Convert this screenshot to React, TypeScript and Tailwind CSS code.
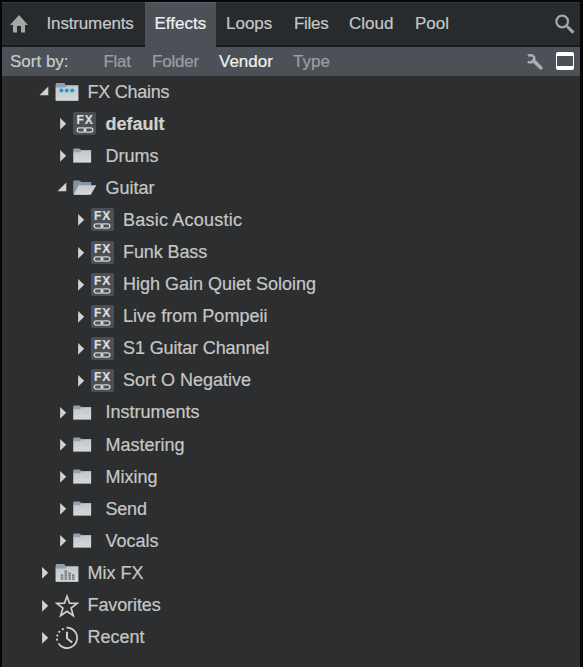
import React from "react";

type Kind = "chains" | "fx" | "folder" | "open" | "mix" | "star" | "recent";
type Row = { label: string; kind: Kind; level: number; open?: boolean; bold?: boolean; tracking?: string };

const rows: Row[] = [
  { label: "FX Chains", kind: "chains", level: 0, open: true, tracking: "tracking-[-0.25px]" },
  { label: "default", kind: "fx", level: 1, bold: true },
  { label: "Drums", kind: "folder", level: 1 },
  { label: "Guitar", kind: "open", level: 1, open: true },
  { label: "Basic Acoustic", kind: "fx", level: 2, tracking: "tracking-[0.22px]" },
  { label: "Funk Bass", kind: "fx", level: 2, tracking: "tracking-[-0.1px]" },
  { label: "High Gain Quiet Soloing", kind: "fx", level: 2 },
  { label: "Live from Pompeii", kind: "fx", level: 2, tracking: "tracking-[0.03px]" },
  { label: "S1 Guitar Channel", kind: "fx", level: 2, tracking: "tracking-[-0.12px]" },
  { label: "Sort O Negative", kind: "fx", level: 2 },
  { label: "Instruments", kind: "folder", level: 1 },
  { label: "Mastering", kind: "folder", level: 1 },
  { label: "Mixing", kind: "folder", level: 1 },
  { label: "Send", kind: "folder", level: 1, tracking: "tracking-[-0.2px]" },
  { label: "Vocals", kind: "folder", level: 1 },
  { label: "Mix FX", kind: "mix", level: 0 },
  { label: "Favorites", kind: "star", level: 0, tracking: "tracking-[-0.1px]" },
  { label: "Recent", kind: "recent", level: 0 },
];

const indents = ["pl-[36px]", "pl-[54px]", "pl-[71.5px]"];

function Gradients() {
  return (
    <svg width="0" height="0" className="absolute">
      <defs>
        <linearGradient id="paper" x1="0" y1="0" x2="0" y2="1">
          <stop offset="0" stopColor="#c3c7ca" />
          <stop offset="1" stopColor="#d6d9da" />
        </linearGradient>
      </defs>
    </svg>
  );
}

function Arrow({ open }: { open?: boolean }) {
  return (
    <svg width="12" height="14" viewBox="0 0 12 14" className="shrink-0">
      {open ? <path d="M1.5 10.3L10.3 1.4V10.3Z" fill="#d2d2d0" /> : <path d="M4.1 .9L10.2 6.8L4.1 12.8Z" fill="#d2d2d0" />}
    </svg>
  );
}

function Icon({ kind }: { kind: Kind }) {
  if (kind === "fx")
    return (
      <span className="mb-px flex h-[23px] w-[23px] flex-col items-center rounded-[2px] bg-[#4b5057] pt-[3px]">
        <span className="h-[11px] pl-px text-[12px] leading-[11px] font-bold tracking-[0.9px] text-[#dededc]">FX</span>
        <svg width="18" height="7" viewBox="0 0 18 7" fill="none" stroke="#d4d4d2" strokeWidth="1.4">
          <rect x="1.2" y="1.9" width="8.3" height="4.2" rx="2.1" />
          <rect x="8.5" y="1.9" width="8.3" height="4.2" rx="2.1" />
          <path d="M7.2 4H10.8" strokeWidth="1" />
        </svg>
      </span>
    );
  return (
    <svg width="24" height="24" viewBox="0 0 24 24" fill="none">
      {(kind === "chains" || kind === "mix") && (
        <>
          <path d="M.5 5Q.5 3 2 3H8.5Q10 3 10.8 5.2H23.3V20.5H.5Z" fill="#8f9fb0" />
          <path d="M.8 7.5H10L12 5.6H23.3V20.8H.8Z" fill="url(#paper)" />
        </>
      )}
      {kind === "chains" && (
        <g fill="#169fcf">
          <circle cx="6.4" cy="10.6" r="2" />
          <circle cx="11.8" cy="10.6" r="2" />
          <circle cx="17.2" cy="10.6" r="2" />
        </g>
      )}
      {kind === "mix" && (
        <g stroke="#62676a" strokeWidth="2.6" strokeDasharray="1.3 .7">
          <path d="M7 18.8V13.4M10.8 18.8V8.7M14.6 18.8V11M18.3 18.8V12.8" />
        </g>
      )}
      {kind === "folder" && (
        <>
          <path d="M.2 5.7Q.2 4.5 1.4 4.5H6.3Q7.4 4.5 8 6H18.2V18.7H.2Z" fill="#93a1b0" />
          <path d="M.5 8.3H7L8.7 6.5H18V18.2H.5Z" fill="url(#paper)" />
        </>
      )}
      {kind === "open" && (
        <>
          <path d="M.2 5.7Q.2 4.5 1.4 4.5H6.3Q7.4 4.5 8 6H18.2V9L15 18.7H.2Z" fill="#8493a7" />
          <path d="M5.5 9.3H23.3L17.8 18.7H.8Z" fill="url(#paper)" />
        </>
      )}
      {kind === "star" && (
        <path d="M12 2.2L14.5 9.2L22.2 9.4L16.1 14L18.3 21.6L12 17.2L5.7 21.6L7.9 14L1.8 9.4L9.5 9.2Z" stroke="#d0d0ce" strokeWidth="1.7" />
      )}
      {kind === "recent" && (
        <g stroke="#d2d2d0" strokeWidth="1.7">
          <path d="M11.5 1.7A10.2 10.2 0 1 1 3.4 17.4" />
          <path d="M12 5.8V12.4L17.2 16.6" strokeWidth="1.9" />
          <g fill="#d2d2d0" stroke="none">
            <circle cx="7.8" cy="3.2" r="1.1" />
            <circle cx="4.3" cy="5.8" r="1.1" />
            <circle cx="2.3" cy="9.6" r="1.1" />
            <circle cx="2" cy="13.7" r="1.1" />
          </g>
        </g>
      )}
    </svg>
  );
}

function Tab({ label, className }: { label: string; className: string }) {
  return <button className={`h-full shrink-0 whitespace-nowrap text-left ${className}`}>{label}</button>;
}

export default function App() {
  return (
    <div className="h-[667px] w-[583px] overflow-hidden bg-[#050606] pt-[2px] pr-[3px] pl-[2px] font-['Liberation_Sans',Arial,sans-serif] text-[#c5c7c7] [-webkit-text-stroke:0.2px_currentColor]">
      <Gradients />
      <div className="flex h-[665px] flex-col bg-[#2c2e2f]">
        <header className="flex h-[45px] shrink-0 items-start bg-[#4c5158] text-[17px]">
          <div className="flex h-[45px] w-[143px] items-center border-t border-b-2 border-t-[#34383b] border-b-[#181b1d] bg-[#272b2d] pl-[8px]">
            <svg width="18" height="18" viewBox="0 0 18 18" className="mr-[18.5px] shrink-0" fill="#a4a5a5">
              <path d="M9 0L18 10H15V17.5H11V11H7V17.5H3V10H0Z" />
            </svg>
            <Tab label="Instruments" className="tracking-[-0.15px]" />
          </div>
          <div className="h-[43px] w-[71px] border-t border-[#5a5f66] pl-[9.5px] text-[#f0f0ef]">
            <Tab label="Effects" className="" />
          </div>
          <nav className="flex h-[45px] flex-1 items-center border-t border-b-2 border-t-[#34383b] border-b-[#181b1d] bg-[#272b2d] pl-[10px]">
            <Tab label="Loops" className="w-[68px]" />
            <Tab label="Files" className="w-[55px] tracking-[-0.3px]" />
            <Tab label="Cloud" className="w-[66px]" />
            <Tab label="Pool" className="w-[140px]" />
            <svg width="20" height="20" viewBox="0 0 20 20" fill="none" stroke="#a6a7a7">
              <circle cx="7.2" cy="7.5" r="5.8" strokeWidth="2.2" />
              <path d="M11.4 11.6L13 13.2" strokeWidth="1.8" />
              <path d="M12.5 12.7L18.4 18.6" strokeWidth="3" />
            </svg>
          </nav>
        </header>
        <div className="flex h-[29px] shrink-0 items-center bg-[#4c5158] pl-[8px] text-[17px] text-[#9b9ea2]">
          <span className="w-[93.5px] text-[#c9cbcc]">Sort by:</span>
          <span className="w-[48.5px] tracking-[-0.3px]">Flat</span>
          <span className="w-[67px] tracking-[-0.2px]">Folder</span>
          <span className="w-[74px] text-[#f0f0ef]">Vendor</span>
          <span className="w-[234px]">Type</span>
          <svg width="16" height="16" viewBox="0 0 16 16" className="mr-[13px] shrink-0" fill="none" stroke="#acafb1">
            <path d="M.8 1.7Q5 .2 7 2.9Q8 6.6 5.6 7.9Q3 9 .6 7.7" strokeWidth="2.4" />
            <path d="M6.4 6.6L13.8 13.8" strokeWidth="3.6" strokeLinecap="round" />
          </svg>
          <span className="mb-[2px] h-[18px] w-[18px] shrink-0 rounded-[2px] border-x-[1.5px] border-y-[4px] border-white" />
        </div>
        <main className="flex flex-col text-[18px]">
          {rows.map((row) => (
            <div key={row.label + row.level} className={`flex h-[32.1px] items-center ${indents[row.level]}`}>
              <Arrow open={row.open} />
              <span className="ml-[5px] flex w-[32.5px] shrink-0 items-center">
                <Icon kind={row.kind} />
              </span>
              <span className={`${row.bold ? "font-bold text-[#d0d1d0]" : ""} ${row.tracking ?? ""}`}>{row.label}</span>
            </div>
          ))}
        </main>
      </div>
    </div>
  );
}
